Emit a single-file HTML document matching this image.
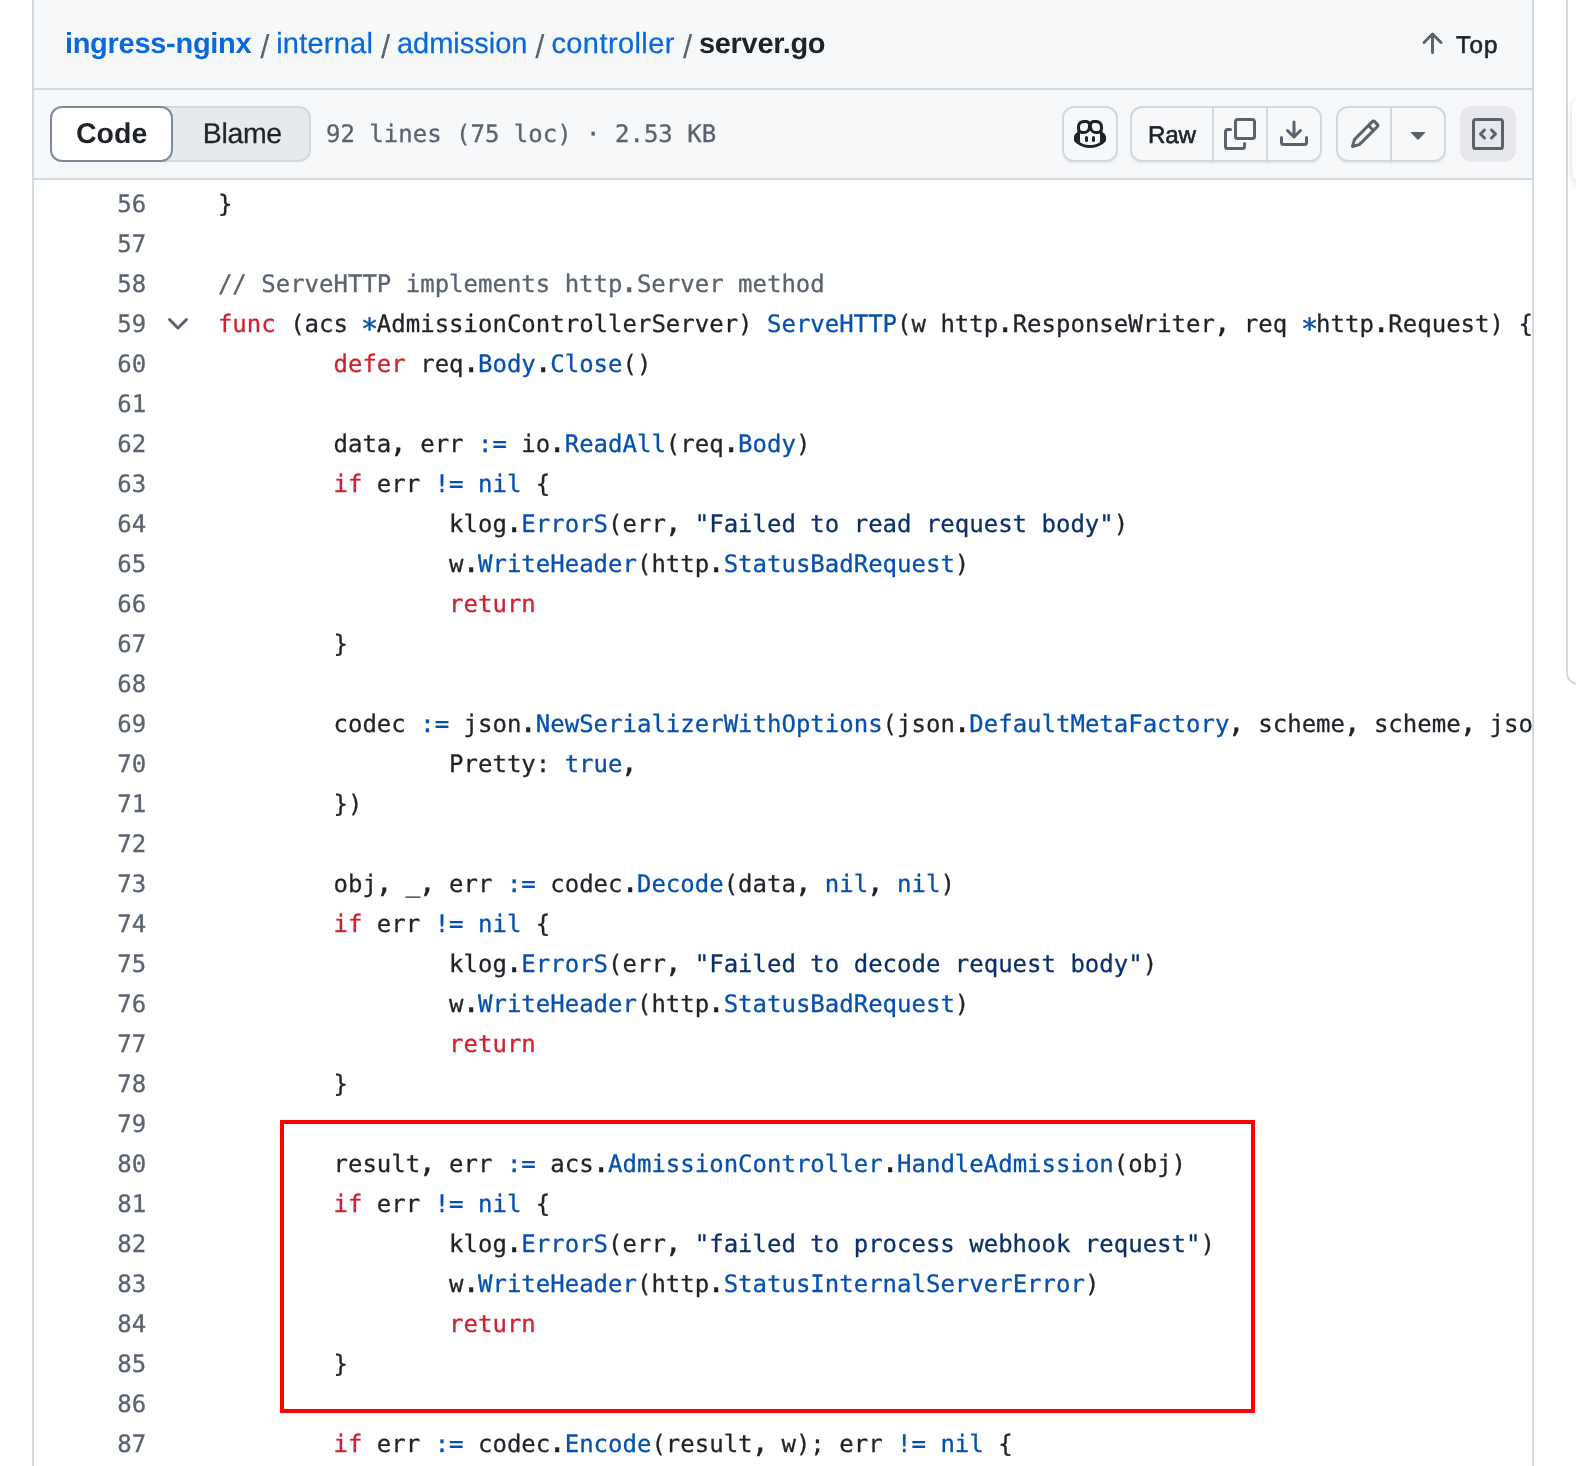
<!DOCTYPE html>
<html lang="en"><head><meta charset="utf-8"><title>server.go</title>
<style>
html,body{margin:0;padding:0;background:#fff}
body{text-rendering:geometricPrecision;width:1576px;height:1466px;overflow:hidden;position:relative;font-family:"Liberation Sans", sans-serif;color:#1f2328}
#view{position:absolute;left:32px;top:-40px;width:1498px;height:1600px;border:2px solid #d1d9e0;overflow:hidden;background:#fff}
/* coordinates inside #view are offset by (-34, +38) relative to page */
#page{position:absolute;left:-34px;top:38px;width:1576px;height:1466px;will-change:transform}
.bar{position:absolute;left:34px;width:1498px;background:#f6f8fa;border-bottom:2px solid #d1d9e0}
#bar1{top:-40px;height:128px}
#bar2{top:90px;height:88px}
.t{position:absolute;white-space:pre;line-height:1}
.ic{position:absolute;display:block}
.crumb{font-size:29px;color:#0969da}
.sep{font-size:33px;color:#59636e}
.btn{position:absolute;box-sizing:border-box;border:2px solid #d1d9e0;border-radius:12px;background:#f6f8fa;box-shadow:0 2px 0 rgba(31,35,40,.04)}
.vd{position:absolute;width:2px;background:#d1d9e0}
.ln,.cl{position:absolute;height:40px;line-height:40px;font-family:"DejaVu Sans Mono", "Liberation Mono", monospace;font-size:24px;white-space:pre;tab-size:8;-moz-tab-size:8}
.ln,.cl,.mono{-webkit-text-stroke-width:0.3px}
.ln{left:0;width:146.1px;text-align:right;color:#59636e}
.cl{left:217.9px;color:#1f2328}
.mono{font-family:"DejaVu Sans Mono", "Liberation Mono", monospace}
.ast{display:inline-block;transform-origin:50% 39.5%;transform:translate(0.4px,4.4px) scale(1.22)}
.dot{display:inline-block;transform-origin:50% 69%;transform:scale(1.3)}
.com{display:inline-block;transform-origin:50% 66%;transform:scale(1.2)}
.k{color:#cf222e}.b{color:#0550ae}.s{color:#0a3069}.c{color:#59636e}
#redbox{position:absolute;left:280px;top:1120px;width:967px;height:285px;border:4px solid #ff0000}
#side{position:absolute;left:1566px;top:-40px;width:60px;height:720.6px;border:2px solid #d1d9e0;border-radius:12px;background:#fff}
#card{position:absolute;left:1572px;top:95.5px;width:60px;height:88px;border-radius:12px;background:#fff;box-shadow:0 0 0 1px rgba(31,35,40,.04),0 2px 6px rgba(31,35,40,.12)}
</style></head>
<body>
<div id="view"><div id="page">
<div class="bar" id="bar1"></div>
<div class="bar" id="bar2"></div>

<!-- breadcrumb -->
<span class="t crumb" style="left:64.9px;top:29.8px;font-weight:bold;letter-spacing:-0.28px">ingress-nginx</span>
<span class="t sep" style="left:260.2px;top:29.8px">/</span>
<span class="t crumb" style="left:276.2px;top:29.8px;letter-spacing:0.22px;-webkit-text-stroke-width:0.25px">internal</span>
<span class="t sep" style="left:381px;top:29.8px">/</span>
<span class="t crumb" style="left:396.9px;top:29.8px;-webkit-text-stroke-width:0.25px">admission</span>
<span class="t sep" style="left:535.2px;top:29.8px">/</span>
<span class="t crumb" style="left:551.4px;top:29.8px;letter-spacing:0.42px;-webkit-text-stroke-width:0.25px">controller</span>
<span class="t sep" style="left:683px;top:29.8px">/</span>
<span class="t crumb" style="left:698.9px;top:29.8px;font-weight:bold;letter-spacing:-0.29px;color:#1f2328">server.go</span>

<svg class="ic" style="left:1416px;top:28px" width="32" height="32" viewBox="0 0 16 16" fill="#59636e"><path d="M3.47 7.78a.75.75 0 0 1 0-1.06l4.25-4.25a.75.75 0 0 1 1.06 0l4.25 4.25a.751.751 0 0 1-.018 1.042.751.751 0 0 1-1.042.018L9 4.81v7.44a.75.75 0 0 1-1.5 0V4.81L4.53 7.78a.75.75 0 0 1-1.06 0Z"/></svg>
<span class="t" style="left:1456.1px;top:33.8px;font-size:24.2px;letter-spacing:1.2px;color:#1f2328;-webkit-text-stroke-width:0.6px">Top</span>

<!-- segmented control -->
<div id="seg" style="position:absolute;left:50px;top:106px;width:261px;height:56px;box-sizing:border-box;border:2px solid #d1d9e0;border-radius:12px;background:#e6eaef"></div>
<div id="segsel" style="position:absolute;left:50px;top:106px;width:123px;height:56px;box-sizing:border-box;border:2px solid #818b98;border-radius:12px;background:#fff"></div>
<span class="t" style="left:76px;top:120px;font-size:28.5px;font-weight:bold">Code</span>
<span class="t" style="left:202.8px;top:120px;font-size:28.5px;letter-spacing:-0.35px;-webkit-text-stroke-width:0.25px">Blame</span>
<span class="t mono" id="meta" style="left:326px;top:122px;font-size:24px;color:#59636e">92 lines (75 loc) · 2.53 KB</span>

<!-- toolbar buttons -->
<div class="btn" style="left:1062px;top:106px;width:56px;height:56px"></div>
<svg class="ic" style="left:1074px;top:118px" width="32" height="32" viewBox="0 0 16 16" fill="#1f2328"><path d="M7.998 15.035c-4.562 0-7.873-2.914-7.998-3.749V9.338c.085-.628.677-1.686 1.588-2.065.013-.07.024-.143.036-.218.029-.183.06-.384.126-.612-.201-.508-.254-1.084-.254-1.656 0-.87.128-1.769.693-2.484.579-.733 1.494-1.124 2.724-1.261 1.206-.134 2.262.034 2.944.765.05.053.096.108.139.165.044-.057.094-.112.143-.165.682-.731 1.738-.899 2.944-.765 1.23.137 2.145.528 2.724 1.261.566.715.693 1.614.693 2.484 0 .572-.053 1.148-.254 1.656.066.228.098.429.126.612.012.076.024.148.037.218.924.385 1.522 1.471 1.591 2.095v1.872c0 .766-3.351 3.795-8.002 3.795Zm0-1.485c2.28 0 4.584-1.11 5.002-1.433V7.862l-.023-.116c-.49.21-1.075.291-1.727.291-1.146 0-2.059-.327-2.71-.991A3.222 3.222 0 0 1 8 6.303a3.24 3.24 0 0 1-.544.743c-.65.664-1.563.991-2.71.991-.652 0-1.236-.081-1.727-.291l-.023.116v4.255c.419.323 2.722 1.433 5.002 1.433ZM6.762 2.83c-.193-.206-.637-.413-1.682-.297-1.019.113-1.479.404-1.713.7-.247.312-.369.789-.369 1.554 0 .793.129 1.171.308 1.371.162.181.519.379 1.442.379.853 0 1.339-.235 1.638-.54.315-.322.527-.827.617-1.553.117-.935-.037-1.395-.241-1.614Zm4.155-.297c-1.044-.116-1.488.091-1.681.297-.204.219-.359.679-.242 1.614.091.726.303 1.231.618 1.553.299.305.784.54 1.638.54.922 0 1.280-.198 1.442-.379.179-.2.308-.578.308-1.371 0-.765-.123-1.242-.37-1.554-.233-.296-.693-.587-1.713-.7Z"/><path d="M6.25 9.037a.75.75 0 0 1 .75.75v1.501a.75.75 0 0 1-1.500 0V9.787a.75.75 0 0 1 .75-.75Zm4.25.75v1.501a.75.75 0 0 1-1.500 0V9.787a.75.75 0 0 1 1.500 0Z"/></svg>
<div class="btn" style="left:1130px;top:106px;width:192px;height:56px"></div>
<div class="vd" style="left:1212px;top:108px;height:54px"></div><div class="vd" style="left:1212px;top:162px;height:2px;opacity:.45"></div>
<div class="vd" style="left:1266px;top:108px;height:54px"></div><div class="vd" style="left:1266px;top:162px;height:2px;opacity:.45"></div>
<span class="t" style="left:1147.9px;top:124.1px;font-size:24.2px;letter-spacing:-0.15px;color:#1f2328;-webkit-text-stroke-width:0.6px">Raw</span>
<svg class="ic" style="left:1224px;top:118px" width="32" height="32" viewBox="0 0 16 16" fill="#59636e"><path d="M0 6.75C0 5.784.784 5 1.75 5h1.5a.75.75 0 0 1 0 1.5h-1.5a.25.25 0 0 0-.25.25v7.5c0 .138.112.25.25.25h7.5a.25.25 0 0 0 .25-.25v-1.5a.75.75 0 0 1 1.5 0v1.5A1.75 1.75 0 0 1 9.25 16h-7.5A1.75 1.75 0 0 1 0 14.25Z"/><path d="M5 1.75C5 .784 5.784 0 6.75 0h7.5C15.216 0 16 .784 16 1.75v7.5A1.75 1.75 0 0 1 14.25 11h-7.5A1.75 1.75 0 0 1 5 9.25Zm1.75-.25a.25.25 0 0 0-.25.25v7.5c0 .138.112.25.25.25h7.5a.25.25 0 0 0 .25-.25v-7.5a.25.25 0 0 0-.25-.25Z"/></svg>
<svg class="ic" style="left:1278px;top:118px" width="32" height="32" viewBox="0 0 16 16" fill="#59636e"><path d="M2.75 14A1.75 1.75 0 0 1 1 12.25v-2.5a.75.75 0 0 1 1.5 0v2.5c0 .138.112.25.25.25h10.5a.25.25 0 0 0 .25-.25v-2.5a.75.75 0 0 1 1.5 0v2.5A1.75 1.75 0 0 1 13.25 14Z"/><path d="M7.25 7.689V2a.75.75 0 0 1 1.5 0v5.689l1.97-1.969a.749.749 0 1 1 1.06 1.06l-3.25 3.25a.749.749 0 0 1-1.06 0L4.22 6.78a.749.749 0 1 1 1.06-1.06l1.97 1.969Z"/></svg>
<div class="btn" style="left:1336px;top:106px;width:110px;height:56px"></div>
<div class="vd" style="left:1390px;top:108px;height:54px"></div><div class="vd" style="left:1390px;top:162px;height:2px;opacity:.45"></div>
<svg class="ic" style="left:1349px;top:118px" width="32" height="32" viewBox="0 0 16 16" fill="#59636e"><path d="M11.013 1.427a1.75 1.75 0 0 1 2.474 0l1.086 1.086a1.75 1.75 0 0 1 0 2.474l-8.61 8.61c-.21.21-.47.364-.756.445l-3.251.93a.75.75 0 0 1-.927-.928l.929-3.25c.081-.286.235-.547.445-.758l8.61-8.61Zm.176 4.823L9.75 4.81l-6.286 6.287a.253.253 0 0 0-.064.108l-.558 1.953 1.953-.558a.253.253 0 0 0 .108-.064Zm1.238-3.763a.25.25 0 0 0-.354 0L10.811 3.75l1.439 1.44 1.263-1.263a.25.25 0 0 0 0-.354Z"/></svg>
<svg class="ic" style="left:1402px;top:118px" width="32" height="32" viewBox="0 0 16 16" fill="#59636e"><path d="m4.427 7.427 3.396 3.396a.25.25 0 0 0 .354 0l3.396-3.396A.25.25 0 0 0 11.396 7H4.604a.25.25 0 0 0-.177.427Z"/></svg>
<div style="position:absolute;left:1460px;top:106px;width:56px;height:56px;border-radius:12px;background:#e6e8eb"></div>
<svg class="ic" style="left:1472px;top:118px" width="32" height="32" viewBox="0 0 16 16" fill="#59636e"><path d="M0 1.75C0 .784.784 0 1.75 0h12.5C15.216 0 16 .784 16 1.75v12.5A1.75 1.75 0 0 1 14.25 16H1.75A1.75 1.75 0 0 1 0 14.25Zm1.75-.25a.25.25 0 0 0-.25.25v12.5c0 .138.112.25.25.25h12.5a.25.25 0 0 0 .25-.25V1.75a.25.25 0 0 0-.25-.25Zm7.47 3.97a.75.75 0 0 1 1.06 0l2 2a.75.75 0 0 1 0 1.06l-2 2a.749.749 0 0 1-1.275-.326.749.749 0 0 1 .215-.734L10.69 8 9.22 6.53a.75.75 0 0 1 0-1.06ZM6.78 6.53 5.31 8l1.47 1.47a.749.749 0 0 1-.326 1.275.749.749 0 0 1-.734-.215l-2-2a.75.75 0 0 1 0-1.06l2-2a.751.751 0 0 1 1.042.018.751.751 0 0 1 .018 1.042Z"/></svg>

<!-- code -->
<svg class="ic" style="left:162px;top:308px" width="32" height="32" viewBox="0 0 16 16" fill="#59636e"><path d="M12.78 5.22a.749.749 0 0 1 0 1.06l-4.25 4.25a.749.749 0 0 1-1.06 0L3.22 6.28a.749.749 0 1 1 1.06-1.06L8 8.939l3.72-3.719a.749.749 0 0 1 1.06 0Z"/></svg>
<div class="ln" style="top:184px">56</div><div class="cl" style="top:184px">}</div>
<div class="ln" style="top:224px">57</div><div class="cl" style="top:224px"></div>
<div class="ln" style="top:264px">58</div><div class="cl" style="top:264px"><span class="c">// ServeHTTP implements http<span class="dot">.</span>Server method</span></div>
<div class="ln" style="top:304px">59</div><div class="cl" style="top:304px"><span class="k">func</span> (acs <span class="b ast">*</span>AdmissionControllerServer) <span class="b">ServeHTTP</span>(w http<span class="dot">.</span>ResponseWriter<span class="com">,</span> req <span class="b ast">*</span>http<span class="dot">.</span>Request) {</div>
<div class="ln" style="top:344px">60</div><div class="cl" style="top:344px">	<span class="k">defer</span> req<span class="dot">.</span><span class="b">Body</span><span class="dot">.</span><span class="b">Close</span>()</div>
<div class="ln" style="top:384px">61</div><div class="cl" style="top:384px"></div>
<div class="ln" style="top:424px">62</div><div class="cl" style="top:424px">	data<span class="com">,</span> err <span class="b">:=</span> io<span class="dot">.</span><span class="b">ReadAll</span>(req<span class="dot">.</span><span class="b">Body</span>)</div>
<div class="ln" style="top:464px">63</div><div class="cl" style="top:464px">	<span class="k">if</span> err <span class="b">!=</span> <span class="b">nil</span> {</div>
<div class="ln" style="top:504px">64</div><div class="cl" style="top:504px">		klog<span class="dot">.</span><span class="b">ErrorS</span>(err<span class="com">,</span> <span class="s">"Failed to read request body"</span>)</div>
<div class="ln" style="top:544px">65</div><div class="cl" style="top:544px">		w<span class="dot">.</span><span class="b">WriteHeader</span>(http<span class="dot">.</span><span class="b">StatusBadRequest</span>)</div>
<div class="ln" style="top:584px">66</div><div class="cl" style="top:584px">		<span class="k">return</span></div>
<div class="ln" style="top:624px">67</div><div class="cl" style="top:624px">	}</div>
<div class="ln" style="top:664px">68</div><div class="cl" style="top:664px"></div>
<div class="ln" style="top:704px">69</div><div class="cl" style="top:704px">	codec <span class="b">:=</span> json<span class="dot">.</span><span class="b">NewSerializerWithOptions</span>(json<span class="dot">.</span><span class="b">DefaultMetaFactory</span><span class="com">,</span> scheme<span class="com">,</span> scheme<span class="com">,</span> json<span class="dot">.</span><span class="b">SerializerOptions</span>{</div>
<div class="ln" style="top:744px">70</div><div class="cl" style="top:744px">		Pretty: <span class="b">true</span><span class="com">,</span></div>
<div class="ln" style="top:784px">71</div><div class="cl" style="top:784px">	})</div>
<div class="ln" style="top:824px">72</div><div class="cl" style="top:824px"></div>
<div class="ln" style="top:864px">73</div><div class="cl" style="top:864px">	obj<span class="com">,</span> _<span class="com">,</span> err <span class="b">:=</span> codec<span class="dot">.</span><span class="b">Decode</span>(data<span class="com">,</span> <span class="b">nil</span><span class="com">,</span> <span class="b">nil</span>)</div>
<div class="ln" style="top:904px">74</div><div class="cl" style="top:904px">	<span class="k">if</span> err <span class="b">!=</span> <span class="b">nil</span> {</div>
<div class="ln" style="top:944px">75</div><div class="cl" style="top:944px">		klog<span class="dot">.</span><span class="b">ErrorS</span>(err<span class="com">,</span> <span class="s">"Failed to decode request body"</span>)</div>
<div class="ln" style="top:984px">76</div><div class="cl" style="top:984px">		w<span class="dot">.</span><span class="b">WriteHeader</span>(http<span class="dot">.</span><span class="b">StatusBadRequest</span>)</div>
<div class="ln" style="top:1024px">77</div><div class="cl" style="top:1024px">		<span class="k">return</span></div>
<div class="ln" style="top:1064px">78</div><div class="cl" style="top:1064px">	}</div>
<div class="ln" style="top:1104px">79</div><div class="cl" style="top:1104px"></div>
<div class="ln" style="top:1144px">80</div><div class="cl" style="top:1144px">	result<span class="com">,</span> err <span class="b">:=</span> acs<span class="dot">.</span><span class="b">AdmissionController</span><span class="dot">.</span><span class="b">HandleAdmission</span>(obj)</div>
<div class="ln" style="top:1184px">81</div><div class="cl" style="top:1184px">	<span class="k">if</span> err <span class="b">!=</span> <span class="b">nil</span> {</div>
<div class="ln" style="top:1224px">82</div><div class="cl" style="top:1224px">		klog<span class="dot">.</span><span class="b">ErrorS</span>(err<span class="com">,</span> <span class="s">"failed to process webhook request"</span>)</div>
<div class="ln" style="top:1264px">83</div><div class="cl" style="top:1264px">		w<span class="dot">.</span><span class="b">WriteHeader</span>(http<span class="dot">.</span><span class="b">StatusInternalServerError</span>)</div>
<div class="ln" style="top:1304px">84</div><div class="cl" style="top:1304px">		<span class="k">return</span></div>
<div class="ln" style="top:1344px">85</div><div class="cl" style="top:1344px">	}</div>
<div class="ln" style="top:1384px">86</div><div class="cl" style="top:1384px"></div>
<div class="ln" style="top:1424px">87</div><div class="cl" style="top:1424px">	<span class="k">if</span> err <span class="b">:=</span> codec<span class="dot">.</span><span class="b">Encode</span>(result<span class="com">,</span> w); err <span class="b">!=</span> <span class="b">nil</span> {</div>
<div id="redbox"></div>
</div></div>
<div id="side"></div>
<div id="card"></div>
</body></html>
